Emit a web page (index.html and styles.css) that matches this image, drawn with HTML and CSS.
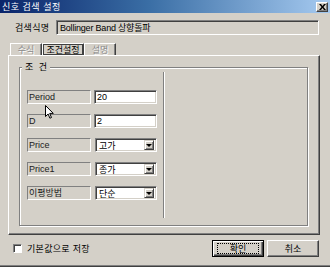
FILE: index.html
```html
<!DOCTYPE html>
<html lang="ko">
<head>
    <meta charset="UTF-8">
    <title>신호 검색 설정</title>
    <link rel="stylesheet" href="styles.css">
</head>
<body>
    <div class="dialog">
        <div class="titlebar">
            <span class="title">신호 검색 설정</span>
            <span class="close">
                <svg width="7" height="6" viewBox="0 0 7 6"><path d="M0 0h2l1.5 2 1.5-2h2L4.5 3 7 6H5L3.5 4 2 6H0l2.5-3z" fill="#000"/></svg>
            </span>
        </div>

        <div class="content">
            <div class="name-row">
                <span class="name-label">검색식명</span>
                <div class="field readonly">Bollinger Band 상향돌파</div>
            </div>

            <div class="tabs">
                <span class="tab disabled">수식</span>
                <span class="tab active"><span class="focus">조건설정</span></span>
                <span class="tab disabled">설명</span>
            </div>

            <div class="panel">
                <div class="group">
                    <span class="legend">조 건</span>
                    <div class="params">
                        <div class="param">
                            <span class="param-label">Period</span>
                            <div class="field edit">20</div>
                        </div>
                        <div class="param">
                            <span class="param-label">D</span>
                            <div class="field edit">2</div>
                        </div>
                        <div class="param">
                            <span class="param-label">Price</span>
                            <div class="field combo"><span class="combo-text">고가</span><span class="drop"></span></div>
                        </div>
                        <div class="param">
                            <span class="param-label">Price1</span>
                            <div class="field combo"><span class="combo-text">종가</span><span class="drop"></span></div>
                        </div>
                        <div class="param">
                            <span class="param-label">이평방법</span>
                            <div class="field combo"><span class="combo-text">단순</span><span class="drop"></span></div>
                        </div>
                    </div>
                    <div class="divider"></div>
                </div>
            </div>

            <div class="footer">
                <label class="check"><span class="box"></span>기본값으로 저장</label>
                <div class="buttons">
                    <button class="btn default"><span class="focus">확인</span></button>
                    <button class="btn">취소</button>
                </div>
            </div>
        </div>

        <svg class="cursor" width="9" height="14" viewBox="0 0 9 14">
            <path d="M0.5 0.5v11l2.6-2.5 1.8 4.2 1.6-0.7-1.8-4.1h3.6z" fill="#fff" stroke="#000" stroke-width="1"/>
        </svg>
    </div>
</body>
</html>
```

FILE: styles.css
```css
* {
    margin: 0;
    padding: 0;
    box-sizing: border-box;
}

body {
    width: 330px;
    height: 267px;
    background: #d4d0c8;
    font-family: 'Liberation Sans', 'Noto Sans CJK KR', sans-serif;
    font-size: 9px;
    color: #000;
    overflow: hidden;
}

.dialog {
    position: relative;
    width: 330px;
    height: 267px;
    background: #d4d0c8;
    border-bottom: 1px solid #404040;
    box-shadow: inset 0 -1px #808080;
}

.titlebar {
    height: 13px;
    display: flex;
    align-items: center;
    justify-content: space-between;
    padding: 0 2px 0 2px;
    background: linear-gradient(to right, #0a246a, #3a6ea5 45%, #a6caf0);
}

.title {
    color: #fff;
    font-family: 'Noto Sans CJK KR', sans-serif;
    font-size: 9px;
    line-height: 13px;
    letter-spacing: 0.5px;
}

.close {
    width: 12px;
    height: 10px;
    display: flex;
    align-items: center;
    justify-content: center;
    background: #d4d0c8;
    border: 1px solid;
    border-color: #fff #404040 #404040 #fff;
    box-shadow: inset -1px -1px #808080;
}

.content {
    padding: 7px 0 0 8px;
}

.name-row {
    display: flex;
    align-items: center;
    padding-left: 7px;
    height: 15px;
}

.name-label {
    width: 41px;
    font-family: 'Noto Sans CJK KR', sans-serif;
    font-size: 9px;
    letter-spacing: 0.3px;
}

.field {
    height: 15px;
    border: 1px solid;
    border-color: #808080 #fff #fff #808080;
    box-shadow: inset 1px 1px #404040, inset -1px -1px #d4d0c8;
    display: flex;
    align-items: center;
    padding-left: 3px;
    white-space: nowrap;
}

.readonly {
    width: 263px;
    background: #d4d0c8;
    letter-spacing: -0.2px;
}

.tabs {
    display: flex;
    margin-top: 8px;
    padding-left: 2px;
    height: 12px;
}

.tab {
    height: 12px;
    display: flex;
    align-items: center;
    justify-content: center;
    border-top: 1px solid #fff;
    border-left: 1px solid #fff;
    border-right: 1px solid #404040;
    box-shadow: inset -1px 0 #808080;
    font-family: 'Noto Sans CJK KR', sans-serif;
    font-size: 9px;
    white-space: nowrap;
}

.tab:nth-child(1) { width: 32px; }
.tab:nth-child(2) { width: 42px; }
.tab:nth-child(3) { width: 32px; }

.tab.disabled {
    color: #8c8c8c;
    text-shadow: 1px 1px #fff;
}

.tab.active .focus {
    border: 1px solid #404040;
    padding: 0 2px;
    line-height: 9px;
}

.panel {
    width: 312px;
    height: 180px;
    border: 1px solid;
    border-color: #fff #404040 #404040 #fff;
    box-shadow: inset -1px -1px #808080;
    padding: 11px 0 0 10px;
}

.group {
    position: relative;
    width: 289px;
    height: 159px;
    border: 1px solid #808080;
    box-shadow: inset 1px 1px #fff, 1px 1px #fff;
    display: flex;
    padding: 4px 0 0 7px;
}

.legend {
    position: absolute;
    top: -7px;
    left: 2px;
    padding: 0 3px;
    background: #d4d0c8;
    font-family: 'Noto Sans CJK KR', sans-serif;
    font-size: 9px;
    line-height: 12px;
    word-spacing: 3px;
}

.params {
    width: 131px;
    padding-top: 18px;
    display: flex;
    flex-direction: column;
    gap: 10px;
}

.param {
    display: flex;
    align-items: center;
    height: 14px;
    gap: 3px;
}

.param-label {
    width: 64px;
    height: 14px;
    border: 1px solid;
    border-color: #808080 #fff #fff #808080;
    padding-left: 1px;
    line-height: 12px;
    font-size: 9px;
    color: #202020;
}

.param:last-child .param-label {
    font-family: 'Noto Sans CJK KR', sans-serif;
}

.edit {
    width: 63px;
    height: 14px;
    background: #fff;
    padding-left: 2px;
}

.combo {
    width: 62px;
    height: 14px;
    margin-left: 1px;
    background: #fff;
    padding: 2px 2px 2px 3px;
    justify-content: space-between;
    font-family: 'Noto Sans CJK KR', sans-serif;
}

.drop {
    width: 10px;
    height: 10px;
    background: #d4d0c8;
    border: 1px solid;
    border-color: #d4d0c8 #404040 #404040 #d4d0c8;
    box-shadow: inset 1px 1px #fff, inset -1px -1px #808080;
    display: flex;
    align-items: center;
    justify-content: center;
}

.drop::after {
    content: '';
    border-left: 3px solid transparent;
    border-right: 3px solid transparent;
    border-top: 3px solid #000;
}

.divider {
    margin-left: 5px;
    width: 2px;
    height: 146px;
    border-left: 1px solid #808080;
    border-right: 1px solid #fff;
}

.footer {
    display: flex;
    align-items: center;
    justify-content: space-between;
    margin-top: 5px;
    padding: 0 11px 0 5px;
    width: 322px;
    height: 17px;
}

.check {
    display: flex;
    align-items: center;
    gap: 5px;
    font-family: 'Noto Sans CJK KR', sans-serif;
    font-size: 9px;
    letter-spacing: 0.3px;
}

.box {
    width: 9px;
    height: 9px;
    background: #fff;
    border: 1px solid;
    border-color: #808080 #fff #fff #808080;
    box-shadow: inset 1px 1px #404040;
}

.buttons {
    display: flex;
    gap: 3px;
}

.btn {
    width: 52px;
    height: 17px;
    background: #d4d0c8;
    border: 1px solid;
    border-color: #fff #404040 #404040 #fff;
    box-shadow: inset -1px -1px #808080;
    font-family: 'Noto Sans CJK KR', sans-serif;
    font-size: 9px;
    color: #000;
    display: flex;
    align-items: center;
    justify-content: center;
}

.btn.default {
    border: 1px solid #000;
    box-shadow: inset 1px 1px #fff, inset -1px -1px #404040, inset -2px -2px #808080;
}

.btn.default .focus {
    width: 42px;
    height: 11px;
    border: 1px dotted #000;
    display: flex;
    align-items: center;
    justify-content: center;
}

.cursor {
    position: absolute;
    left: 45px;
    top: 105px;
}
```
